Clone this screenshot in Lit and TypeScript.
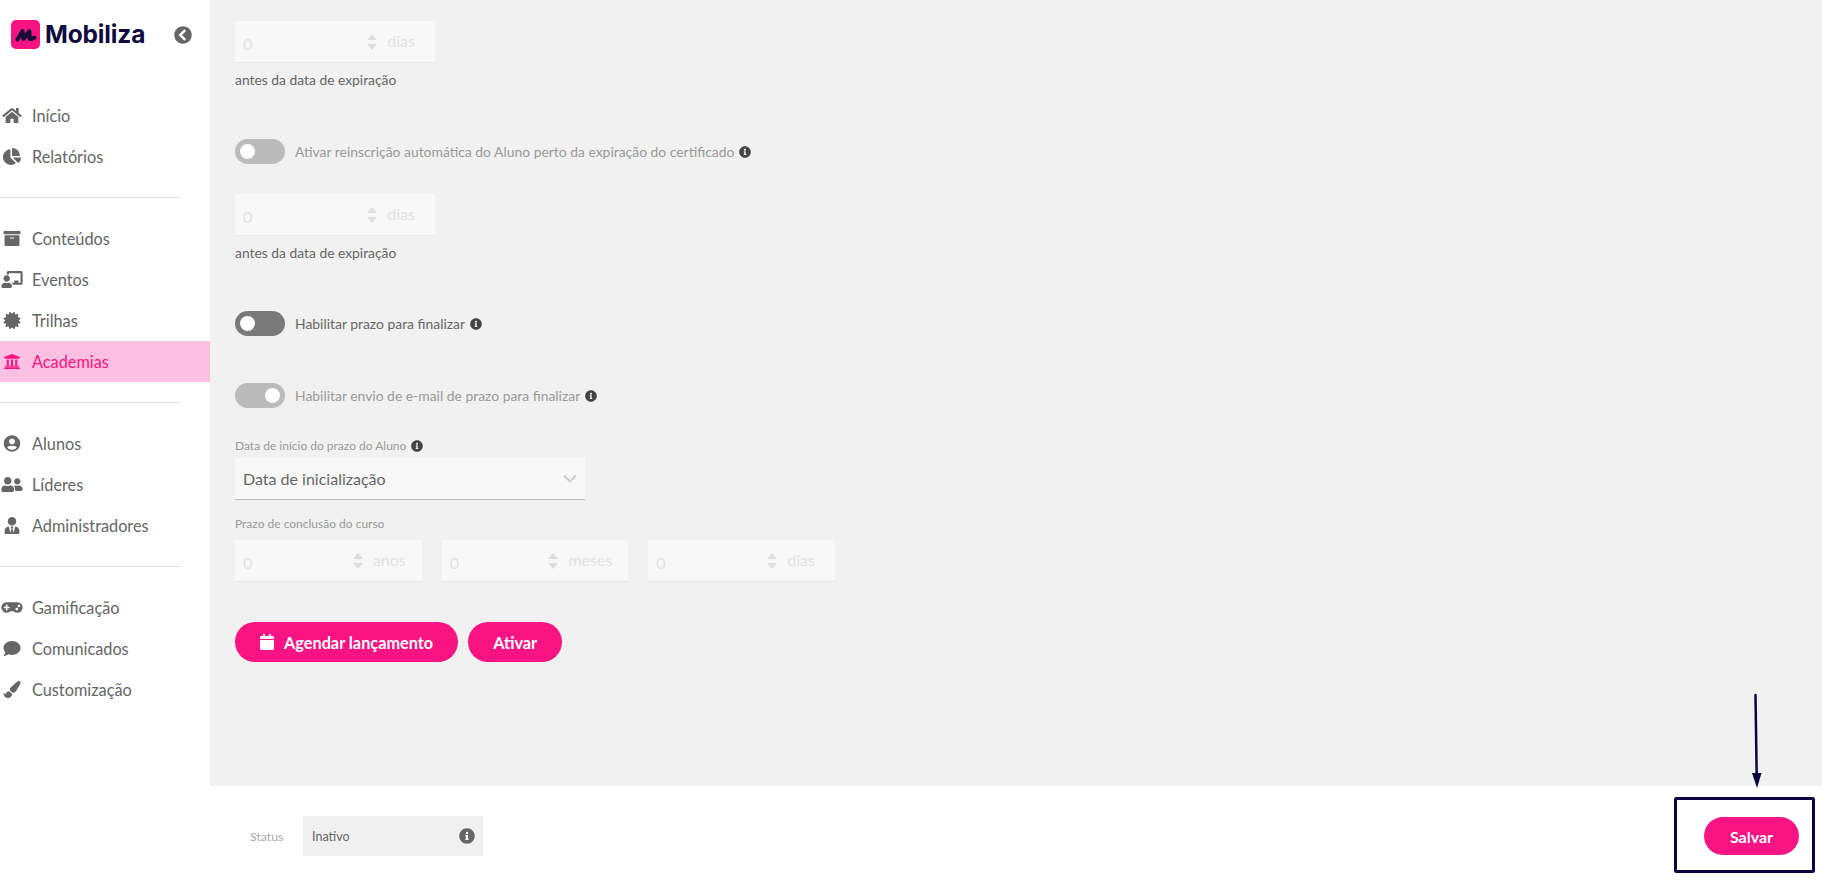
import { LitElement, html, css, svg } from "lit";
import { customElement } from "lit/decorators.js";

type Ic = { vb: string; d: string };
const I: Record<string, Ic> = {
  home: { vb: "0 0 576 512", d: "M280.37 148.26L96 300.11V464a16 16 0 0 0 16 16l112.06-.29a16 16 0 0 0 15.92-16V368a16 16 0 0 1 16-16h64a16 16 0 0 1 16 16v95.64a16 16 0 0 0 16 16.05L464 480a16 16 0 0 0 16-16V300L295.67 148.26a12.19 12.19 0 0 0-15.3 0zM571.6 251.47L488 182.56V44.05a12 12 0 0 0-12-12h-56a12 12 0 0 0-12 12v72.61L318.47 43a48 48 0 0 0-61 0L4.34 251.47a12 12 0 0 0-1.6 16.9l25.5 31A12 12 0 0 0 45.15 301l235.22-193.74a12.19 12.19 0 0 1 15.3 0L530.9 301a12 12 0 0 0 16.9-1.6l25.5-31a12 12 0 0 0-1.7-16.93z" },
  pie: { vb: "0 0 544 512", d: "M527.79 288H290.5l158.03 158.03c6.04 6.04 15.98 6.53 22.19.68 38.7-36.46 65.32-85.61 73.13-140.86 1.34-9.46-6.51-17.85-16.06-17.85zm-15.83-64.8C503.72 103.74 408.26 8.28 288.8.04 279.68-.59 272 7.1 272 16.24V240h223.77c9.14 0 16.82-7.68 16.19-16.8zM224 288V50.71c0-9.55-8.39-17.4-17.84-16.06C86.99 51.49-4.1 155.6.14 280.37 4.5 408.51 114.83 513.59 243.03 511.98c50.4-.63 96.97-16.87 135.26-44.03 7.9-5.6 8.42-17.23 1.57-24.08L224 288z" },
  archive: { vb: "0 0 512 512", d: "M32 448c0 17.7 14.3 32 32 32h384c17.7 0 32-14.3 32-32V160H32v288zm160-212c0-6.6 5.4-12 12-12h104c6.6 0 12 5.4 12 12v8c0 6.6-5.4 12-12 12H204c-6.6 0-12-5.4-12-12v-8zM480 32H32C14.3 32 0 46.3 0 64v48c0 8.8 7.2 16 16 16h480c8.8 0 16-7.2 16-16V64c0-17.7-14.3-32-32-32z" },
  teacher: { vb: "0 0 640 512", d: "M208 352c-2.39 0-4.78.35-7.06 1.09C187.98 357.3 174.35 360 160 360c-14.35 0-27.98-2.7-40.95-6.91-2.28-.74-4.66-1.09-7.05-1.09C49.94 352-.33 402.48 0 464.62.14 490.88 21.73 512 48 512h224c26.27 0 47.86-21.12 48-47.38.33-62.14-49.94-112.62-112-112.62zm-48-32c53.02 0 96-42.98 96-96s-42.98-96-96-96-96 42.98-96 96 42.98 96 96 96zM592 0H208c-26.47 0-48 22.25-48 49.59V96c23.42 0 45.1 6.78 64 17.8V64h352v288h-64v-64H384v64h-76.24c19.1 16.69 33.12 38.73 39.69 64H592c26.47 0 48-22.25 48-49.59V49.59C640 22.25 618.47 0 592 0z" },
  cert: { vb: "0 0 512 512", d: "M458.622 255.92l45.985-45.005c13.708-12.977 7.316-36.039-10.664-40.339l-62.65-15.99 17.661-62.015c4.991-17.838-11.829-34.663-29.661-29.671l-61.994 17.667-15.984-62.671C337.085.197 313.765-6.276 300.99 7.228L256 53.57 211.011 7.229c-12.63-13.351-36.047-7.234-40.325 10.668l-15.984 62.671-61.995-17.667C74.87 57.907 58.056 74.738 63.046 92.572l17.661 62.015-62.65 15.99C.069 174.878-6.31 197.944 7.392 210.915l45.985 45.005-45.985 45.004c-13.708 12.977-7.316 36.039 10.664 40.339l62.65 15.99-17.661 62.015c-4.991 17.838 11.829 34.663 29.661 29.671l61.994-17.667 15.984 62.671c4.439 18.575 27.696 24.018 40.325 10.668L256 458.61l44.989 46.001c12.5 13.488 35.987 7.486 40.325-10.668l15.984-62.671 61.994 17.667c17.836 4.994 34.651-11.837 29.661-29.671l-17.661-62.015 62.65-15.99c17.987-4.302 24.366-27.367 10.664-40.339l-45.984-45.004z" },
  uni: { vb: "0 0 512 512", d: "M496 128v16a8 8 0 0 1-8 8h-24v12c0 6.627-5.373 12-12 12H60c-6.627 0-12-5.373-12-12v-12H24a8 8 0 0 1-8-8v-16a8 8 0 0 1 4.941-7.392l232-88a7.996 7.996 0 0 1 6.118 0l232 88A8 8 0 0 1 496 128zm-24 304H40c-13.255 0-24 10.745-24 24v16a8 8 0 0 0 8 8h464a8 8 0 0 0 8-8v-16c0-13.255-10.745-24-24-24zM96 192v192H60c-6.627 0-12 5.373-12 12v20h416v-20c0-6.627-5.373-12-12-12h-36V192h-64v192h-64V192h-64v192h-64V192H96z" },
  user: { vb: "0 0 496 512", d: "M248 8C111 8 0 119 0 256s111 248 248 248 248-111 248-248S385 8 248 8zm0 96c48.6 0 88 39.4 88 88s-39.4 88-88 88-88-39.4-88-88 39.4-88 88-88zm0 344c-58.7 0-111.3-26.6-146.5-68.2 18.8-35.4 55.6-59.8 98.5-59.8 2.4 0 4.8.4 7.1 1.1 13 4.2 26.6 6.9 40.9 6.9 14.3 0 28-2.7 40.9-6.9 2.3-.7 4.7-1.1 7.1-1.1 42.9 0 79.7 24.4 98.5 59.8C359.3 421.4 306.7 448 248 448z" },
  friends: { vb: "0 0 640 512", d: "M192 256c61.9 0 112-50.1 112-112S253.9 32 192 32 80 82.1 80 144s50.1 112 112 112zm76.8 32h-8.3c-20.8 10-43.9 16-68.5 16s-47.6-6-68.5-16h-8.3C51.6 288 0 339.6 0 403.2V432c0 26.5 21.5 48 48 48h288c26.5 0 48-21.5 48-48v-28.8c0-63.6-51.6-115.2-115.2-115.2zM480 256c53 0 96-43 96-96s-43-96-96-96-96 43-96 96 43 96 96 96zm48 32h-3.8c-13.9 4.8-28.6 8-44.2 8s-30.3-3.2-44.2-8H432c-20.4 0-39.2 5.9-55.7 15.4 24.4 26.3 39.7 61.2 39.7 99.8v38.4c0 2.2-.5 4.3-.6 6.4H592c26.5 0 48-21.5 48-48 0-61.9-50.1-112-112-112z" },
  tie: { vb: "0 0 448 512", d: "M224 256c70.7 0 128-57.3 128-128S294.7 0 224 0 96 57.3 96 128s57.3 128 128 128zm95.8 32.6L272 480l-32-136 32-56h-96l32 56-32 136-47.8-191.4C56.9 292 0 350.3 0 422.4V464c0 26.5 21.5 48 48 48h352c26.5 0 48-21.5 48-48v-41.6c0-72.1-56.9-130.4-128.2-133.8z" },
  game: { vb: "0 0 640 512", d: "M480.07 96H160a160 160 0 1 0 114.24 272h91.52A160 160 0 1 0 480.07 96zM248 268a12 12 0 0 1-12 12h-52v52a12 12 0 0 1-12 12h-24a12 12 0 0 1-12-12v-52H84a12 12 0 0 1-12-12v-24a12 12 0 0 1 12-12h52v-52a12 12 0 0 1 12-12h24a12 12 0 0 1 12 12v52h52a12 12 0 0 1 12 12zm216 76a40 40 0 1 1 40-40 40 40 0 0 1-40 40zm64-96a40 40 0 1 1 40-40 40 40 0 0 1-40 40z" },
  comment: { vb: "0 0 512 512", d: "M256 32C114.6 32 0 125.1 0 240c0 49.6 21.4 95 57 130.7C44.5 421.1 2.7 466 2.2 466.5c-2.2 2.3-2.8 5.7-1.5 8.7S4.8 480 8 480c66.3 0 116-31.8 140.6-51.4 32.7 12.3 69 19.4 107.4 19.4 141.4 0 256-93.1 256-208S397.4 32 256 32z" },
  brush: { vb: "0 0 512 512", d: "M167.02 309.34c-40.12 2.58-76.53 17.86-97.19 72.3-2.35 6.21-8 9.98-14.59 9.98-11.11 0-45.46-27.67-55.25-34.35C0 439.62 37.93 512 128 512c75.86 0 128-43.77 128-120.19 0-3.11-.65-6.08-.97-9.13l-88.01-73.34zM457.89 0c-15.16 0-29.37 6.71-40.21 16.45C213.27 199.05 192 203.34 192 257.09c0 13.7 3.25 26.76 8.73 38.7l63.82 53.18c7.21 1.8 14.64 3.03 22.39 3.03 62.11 0 98.11-45.47 211.16-256.46 7.38-14.35 13.9-29.85 13.9-45.99C512 20.64 486 0 457.89 0z" },
  back: { vb: "0 0 512 512", d: "M256 504C119 504 8 393 8 256S119 8 256 8s248 111 248 248-111 248-248 248zM142.1 273l135.5 135.5c9.4 9.4 24.6 9.4 33.9 0l17-17c9.4-9.4 9.4-24.6 0-33.9L226.9 256l101.6-101.6c9.4-9.4 9.4-24.6 0-33.9l-17-17c-9.4-9.4-24.6-9.4-33.9 0L142.1 239c-9.4 9.4-9.4 24.6 0 34z" },
  info: { vb: "0 0 512 512", d: "M256 8C119.043 8 8 119.083 8 256c0 136.997 111.043 248 248 248s248-111.003 248-248C504 119.083 392.957 8 256 8zm0 110c23.196 0 42 18.804 42 42s-18.804 42-42 42-42-18.804-42-42 18.804-42 42-42zm56 254c0 6.627-5.373 12-12 12h-88c-6.627 0-12-5.373-12-12v-24c0-6.627 5.373-12 12-12h12v-64h-12c-6.627 0-12-5.373-12-12v-24c0-6.627 5.373-12 12-12h64c6.627 0 12 5.373 12 12v100h12c6.627 0 12 5.373 12 12v24z" },
  cal: { vb: "0 0 448 512", d: "M12 192h424c6.6 0 12 5.4 12 12v260c0 26.5-21.5 48-48 48H48c-26.5 0-48-21.5-48-48V204c0-6.6 5.4-12 12-12zm436-44v-36c0-26.5-21.5-48-48-48h-48V12c0-6.6-5.4-12-12-12h-40c-6.6 0-12 5.4-12 12v52H160V12c0-6.6-5.4-12-12-12h-40c-6.6 0-12 5.4-12 12v52H48C21.5 64 0 85.5 0 112v36c0 6.6 5.4 12 12 12h424c6.6 0 12-5.4 12-12z" },
};

const icon = (n: string, cls = "") =>
  html`<svg class="ic ${cls}" viewBox=${I[n].vb} aria-hidden="true"><path fill="currentColor" d=${I[n].d}></path></svg>`;

const groups: [string, string, boolean?][][] = [
  [["home", "Início"], ["pie", "Relatórios"]],
  [["archive", "Conteúdos"], ["teacher", "Eventos"], ["cert", "Trilhas"], ["uni", "Academias", true]],
  [["user", "Alunos"], ["friends", "Líderes"], ["tie", "Administradores"]],
  [["game", "Gamificação"], ["comment", "Comunicados"], ["brush", "Customização"]],
];

@customElement("app-root")
export class AppRoot extends LitElement {
  static styles = css`
    :host { display: block; width: 1822px; height: 880px; position: relative; overflow: hidden; font-family: Lato, "Open Sans", sans-serif; color: #666; background: #fff; }
    .app { display: flex; height: 880px; }
    .side { width: 210px; flex: none; background: #fff; }
    .logo { height: 95px; box-sizing: border-box; padding: 20px 0 0 11px; display: flex; align-items: flex-start; position: relative; }
    .mark { width: 29px; height: 29px; border-radius: 5px; background: #fa1383; flex: none; display: flex; align-items: center; justify-content: center; }
    .mark svg { width: 22px; height: 14px; }
    .word { font-family: Inter, sans-serif; font-weight: 700; font-size: 24.5px; line-height: 29px; letter-spacing: -0.15px; color: #0f0b3e; margin-left: 5px; }
    .back { position: absolute; left: 174px; top: 26px; width: 18px; height: 18px; color: #666; }
    .group { padding-bottom: 21px; margin-bottom: 20px; position: relative; }
    .group:not(:last-child)::after { content: ""; position: absolute; left: 0; bottom: 0; width: 180px; height: 1px; background: #e2e2e2; }
    .row { height: 41px; display: flex; align-items: center; font-size: 16.3px; color: #666; }
    .row.on { background: #fdc0e0; color: #fa1383; }
    .slot { width: 32px; flex: none; display: flex; justify-content: center; padding-right: 9px; box-sizing: border-box; }
    .slot .ic { width: 22px; height: 17px; }
    .ic { display: block; }
    .right { flex: 1; display: flex; flex-direction: column; min-width: 0; }
    .main { flex: 1; background: #f1f1f1; padding: 21px 0 0 25px; }
    .num { height: 42px; box-sizing: border-box; background: #f8f8f8; border-bottom: 1px solid #e8e8e8; display: flex; align-items: center; padding: 0 20px 0 8px; font-size: 16px; color: #e2e2e2; }
    .num.tight { padding-right: 16px; }
    .num .v { flex: 1; padding-top: 3px; }
    .num .u { margin-left: 10px; margin-top: -3px; }
    .w200 { width: 200px; }
    .w187 { width: 186.67px; }
    .spin { display: flex; flex-direction: column; gap: 4px; }
    .spin i { display: block; width: 0; height: 0; border-left: 5px solid transparent; border-right: 5px solid transparent; }
    .spin i:first-child { border-bottom: 6px solid #ddd; }
    .spin i:last-child { border-top: 6px solid #ddd; }
    .note { font-size: 13.85px; line-height: 18px; margin-top: 8px; color: #666; }
    .line { display: flex; align-items: center; height: 25px; font-size: 13.9px; }
    .tg { width: 50px; height: 25px; border-radius: 13px; flex: none; display: flex; align-items: center; padding: 0 5px; box-sizing: border-box; margin-right: 10px; }
    .tg b { display: block; width: 15px; height: 15px; border-radius: 50%; background: #fff; }
    .tg.off { background: #bbb; }
    .tg.dark { background: #7a7a7a; }
    .tg.rt { justify-content: flex-end; }
    .line .ic, .lab .ic { width: 12px; height: 12px; color: #444; margin-left: 5px; }
    .dim { color: #999; }
    .t1 { margin-top: 50px; }
    .t2 { margin-top: 30px; }
    .t4 { margin-top: 49px; }
    .t5 { margin-top: 47px; }
    .lab { display: flex; align-items: center; font-size: 12px; line-height: 16px; color: #999; }
    .lab.a { margin-top: 30px; margin-bottom: 4px; }
    .lab.b { margin-top: 16px; margin-bottom: 8px; }
    .sel { width: 350px; height: 42px; box-sizing: border-box; background: #f8f8f8; border-bottom: 1px solid #bbb; display: flex; align-items: center; justify-content: space-between; padding: 0 8px; font-size: 16px; color: #666; }
    .sel svg { width: 14px; height: 9px; }
    .nums { display: flex; gap: 20px; }
    .btns { display: flex; gap: 10px; margin-top: 40px; }
    .btn { height: 40px; border-radius: 20px; background: #fa1383; color: #fff; font-weight: 700; font-size: 16.3px; display: flex; align-items: center; border: 0; font-family: inherit; padding: 0 25px; }
    .btn .ic { width: 14px; height: 16px; margin-right: 10px; }
    .foot { height: 94px; flex: none; background: #fff; display: flex; align-items: center; padding: 0 23px 0 40px; }
    .st { font-size: 12.3px; color: #aaa; width: 53px; margin-top: 6px; }
    .stbox { width: 180px; height: 40px; margin-top: 6px; background: #f0f0f0; display: flex; align-items: center; justify-content: space-between; padding: 0 8px 0 9px; box-sizing: border-box; font-size: 12.5px; color: #666; }
    .stbox .ic { width: 16px; height: 16px; color: #666; }
    .save { margin-left: auto; margin-top: 6px; height: 38px; width: 95px; justify-content: center; padding: 0; border-radius: 19px; font-size: 16px; }
    .note-over { position: absolute; left: 1660px; top: 685px; width: 162px; height: 195px; pointer-events: none; }
  `;

  private num(w: string, unit: string) {
    return html`<div class="num ${w} ${unit === "dias" ? "" : "tight"}"><span class="v">0</span><span class="spin"><i></i><i></i></span><span class="u">${unit}</span></div>`;
  }

  render() {
    return html`
      <div class="app">
        <aside class="side">
          <div class="logo">
            <div class="mark">
              <svg viewBox="0 0 22 14"><path fill="none" stroke="#1a0b3a" stroke-width="4" stroke-linecap="round" stroke-linejoin="round" d="M2.500 11.500 7.500 3 8.500 11 14.500 3 14.500 10.500Q15 12 19.500 9.500"></path></svg>
            </div>
            <span class="word">Mobiliza</span>
            ${icon("back", "back")}
          </div>
          ${groups.map((g) => html`<div class="group">
            ${g.map(([ic, t, on]) => html`<div class="row ${on ? "on" : ""}"><span class="slot">${icon(ic)}</span><span>${t}</span></div>`)}
          </div>`)}
        </aside>
        <div class="right">
          <main class="main">
            ${this.num("w200", "dias")}
            <div class="note">antes da data de expiração</div>
            <div class="line t1 dim"><span class="tg off"><b></b></span>Ativar reinscrição automática do Aluno perto da expiração do certificado ${icon("info")}</div>
            <div class="t2">${this.num("w200", "dias")}</div>
            <div class="note">antes da data de expiração</div>
            <div class="line t4"><span class="tg dark"><b></b></span>Habilitar prazo para finalizar ${icon("info")}</div>
            <div class="line t5 dim"><span class="tg off rt"><b></b></span>Habilitar envio de e-mail de prazo para finalizar ${icon("info")}</div>
            <div class="lab a">Data de início do prazo do Aluno ${icon("info")}</div>
            <div class="sel">Data de inicialização
              <svg viewBox="0 0 14 9"><path d="M1 1.500 7 7.500 13 1.500" fill="none" stroke="#ccc" stroke-width="2"></path></svg>
            </div>
            <div class="lab b">Prazo de conclusão do curso</div>
            <div class="nums">${this.num("w187", "anos")}${this.num("w187", "meses")}${this.num("w187", "dias")}</div>
            <div class="btns">
              <button class="btn">${icon("cal")}Agendar lançamento</button>
              <button class="btn">Ativar</button>
            </div>
          </main>
          <footer class="foot">
            <span class="st">Status</span>
            <div class="stbox"><span>Inativo</span>${icon("info")}</div>
            <button class="btn save">Salvar</button>
          </footer>
        </div>
      </div>
      <svg class="note-over" viewBox="1660 685 162 195" aria-hidden="true">
        ${svg`<path d="M1755.500 695 1756.700 776" stroke="#0a0541" stroke-width="2.500" stroke-linecap="round" fill="none"></path>
        <path d="M1752 773 1761.500 773 1757 788Z" fill="#0a0541"></path>
        <rect x="1675.500" y="798.500" width="138" height="73" rx="1" fill="none" stroke="#0a0541" stroke-width="3"></rect>`}
      </svg>
    `;
  }
}
